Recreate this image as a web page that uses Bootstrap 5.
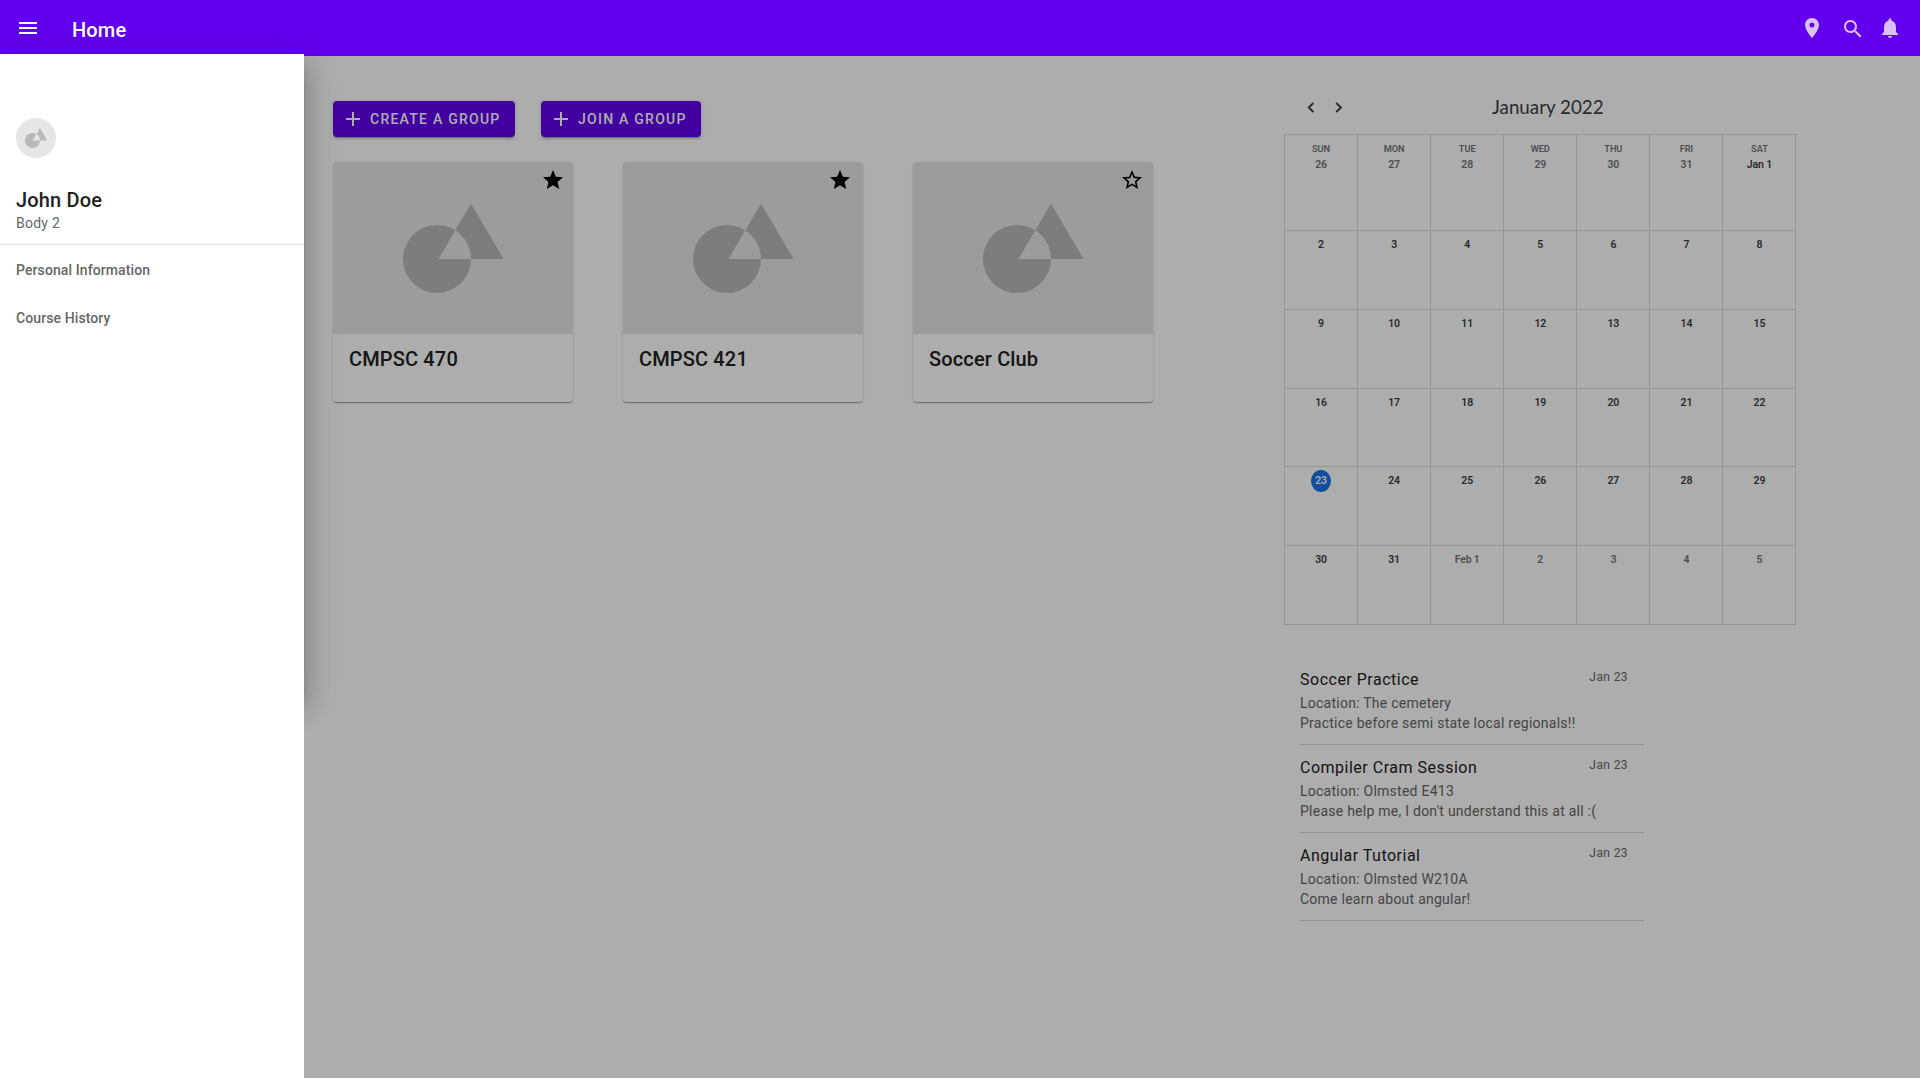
<!DOCTYPE html>
<html lang="en">
<head>
<meta charset="utf-8">
<meta name="viewport" content="width=device-width, initial-scale=1">
<title>Home</title>
<link href="https://cdn.jsdelivr.net/npm/bootstrap@5.3.0/dist/css/bootstrap.min.css" rel="stylesheet">
<style>
  body { font-family: Roboto, "Liberation Sans", sans-serif; height: 1080px; overflow: hidden; color: #212121; }
  .topbar { height: 56px; padding: 0 18px 0 16px; background: #6200ee; }
  .topbar-title { font-size: 20px; font-weight: 500; letter-spacing: .15px; line-height: 24px; margin: 2px 0 0 32px; }
  .topbar-icons { color: rgba(255,255,255,.76); }
  .ic { width: 24px; height: 24px; fill: currentColor; display: block; flex: none; }
  .ic-search { margin: 1px 13px 0 17px; }
  .page-body { height: 1022px; padding-left: 333px; }
  .groups { width: 820px; margin-right: 131px; padding-top: 45px; }
  .group-actions { gap: 26px; }
  .btn-group-action { width: 160px; height: 36px; padding: 0 0 0 8px; gap: 5px; border: 0; border-radius: 4px; background: #6200ee; color: #fff; white-space: nowrap;
    font-size: 14px; font-weight: 500; letter-spacing: 1.25px; line-height: 36px;
    box-shadow: 0 3px 1px -2px rgba(0,0,0,.2), 0 2px 2px rgba(0,0,0,.14), 0 1px 5px rgba(0,0,0,.12); }
  .btn-create { width: 182px; }
  .group-list { gap: 50px; margin-top: 25px; }
  .group-card { width: 240px; height: 240px; border: 0; border-radius: 4px; overflow: visible;
    box-shadow: 0 2px 1px -1px rgba(0,0,0,.2), 0 1px 1px rgba(0,0,0,.14), 0 1px 3px rgba(0,0,0,.12); }
  .group-pic { height: 172px; background: #e6e6e6; border-radius: 4px 4px 0 0; }
  .group-pic > svg { display: block; }
  .shape { fill: #b9b9b9; fill-rule: evenodd; }
  .star { top: 6px; right: 8px; color: #000; }
  .star-b { right: 11px; }
  .star-c { right: 9px; }
  .group-name { font-size: 20px; font-weight: 500; letter-spacing: .15px; line-height: 24px; padding: 13px 16px; margin: 0; }
  .agenda { width: 514px; }
  .cal-head { height: 78px; padding-top: 26px; }
  .cal-nav { width: 200px; padding-left: 17px; color: #3c4043; }
  .cal-nav svg { fill: none; stroke: currentColor; stroke-width: 1.9; }
  .cal-title { font-family: Lato, sans-serif; font-size: 18.8px; line-height: 26px; color: #3c4043; white-space: nowrap; margin-left: 8px; }
  .cal { width: 512.5px; border-top: 1px solid #dadce0; border-left: 1px solid #dadce0; }
  .week { display: grid; grid-template-columns: repeat(7, 1fr); height: 79px; }
  .week-first { height: 96px; }
  .week-short { height: 78px; }
  .day { border-right: 1px solid #dadce0; border-bottom: 1px solid #dadce0; text-align: center; font-size: 10.5px; font-weight: 600; color: #3c4043; padding-top: 3px; letter-spacing: -.15px; }
  .day > span { display: block; line-height: 22px; }
  .dow { font-size: 9.2px; line-height: 12px; color: #70757a; padding-top: 5px; margin-bottom: -1px; letter-spacing: -.05px; }
  .off { color: #70757a; }
  .day > .today { width: 20px; height: 22px; margin: 0 auto; border-radius: 50%; background: #1a73e8; color: #fff; }
  .events { width: 344px; margin: 32px 0 0 16px; }
  .event { height: 88px; border-bottom: 1px solid #dadada; padding-top: 11px; }
  .event-title { font-size: 16px; letter-spacing: .5px; line-height: 24px; height: 25px; }
  .event-date { font-size: 12px; letter-spacing: .4px; line-height: 16px; padding: 1px 16px 0 0; color: #666; }
  .event-line { font-size: 14px; letter-spacing: .25px; line-height: 20px; color: #666; }
  .scrim { top: 56px; left: 0; width: 1920px; height: 1022px; background: rgba(0,0,0,.32); }
  .drawer { top: 54px; left: 0; width: 304px; height: 1026px; background: #fff; }
  .drawer-shade { top: 54px; left: 0; width: 304px; height: 640px;
    box-shadow: 0 8px 10px -5px rgba(0,0,0,.2), 0 16px 24px 2px rgba(0,0,0,.14), 0 6px 30px 5px rgba(0,0,0,.12); }
  .profile { padding: 64px 16px 11px; border-bottom: 1px solid #e0e0e0; margin-bottom: 1px; }
  .avatar { width: 40px; height: 40px; border-radius: 50%; background: #e6e6e6; display: block; margin-bottom: 29px; }
  .user-name { font-size: 20px; font-weight: 500; letter-spacing: .15px; line-height: 26px; margin: 0; }
  .user-sub { font-size: 14px; letter-spacing: .25px; line-height: 20px; color: #666; }
  .drawer-item { height: 48px; padding: 0 16px; border: 0; font-size: 14px; font-weight: 500; letter-spacing: .1px; color: #666; }
</style>
<script src="https://cdn.jsdelivr.net/npm/bootstrap@5.3.0/dist/js/bootstrap.bundle.min.js"></script>
</head>
<body class="bg-white position-relative">
<svg class="d-none" aria-hidden="true">
  <symbol id="plus" viewBox="0 0 24 24"><path d="M19 13h-6v6h-2v-6H5v-2h6V5h2v6h6v2z"/></symbol>
  <symbol id="star" viewBox="0 0 24 24"><path d="M12 17.27L18.18 21l-1.64-7.03L22 9.24l-7.19-.61L12 2 9.19 8.63 2 9.24l5.46 4.73L5.82 21z"/></symbol>
  <symbol id="star-o" viewBox="0 0 24 24"><path d="M22 9.24l-7.19-.62L12 2 9.19 8.63 2 9.24l5.46 4.73L5.82 21 12 17.27 18.18 21l-1.63-7.03L22 9.24zM12 15.4l-3.76 2.27 1-4.28-3.32-2.88 4.38-.38L12 6.1l1.71 4.04 4.38.38-3.32 2.88 1 4.28L12 15.4z"/></symbol>
  <symbol id="media" viewBox="0 0 240 172"><path class="shape" d="M70 97a34 34 0 1 1 68 0a34 34 0 1 1-68 0zM138 41.5L170.5 97h-65z"/></symbol>
</svg>

<nav class="topbar d-flex align-items-start text-white">
  <svg class="ic mt-3" viewBox="0 0 24 24"><path d="M3 18h18v-2H3v2zm0-5h18v-2H3v2zm0-7v2h18V6H3z"/></svg>
  <div class="topbar-title pt-3">Home</div>
  <div class="topbar-icons d-flex ms-auto pt-3">
    <svg class="ic" viewBox="0 0 24 24"><path d="M12 2C8.13 2 5 5.13 5 9c0 5.25 7 13 7 13s7-7.75 7-13c0-3.87-3.13-7-7-7zm0 9.5a2.5 2.5 0 1 1 0-5 2.5 2.5 0 0 1 0 5z"/></svg>
    <svg class="ic ic-search" viewBox="0 0 24 24"><path d="M15.5 14h-.79l-.28-.27C15.41 12.59 16 11.11 16 9.5 16 5.91 13.09 3 9.5 3S3 5.91 3 9.5 5.91 16 9.5 16c1.61 0 3.09-.59 4.23-1.57l.27.28v.79l5 4.99L20.49 19l-4.99-5zm-6 0C7.01 14 5 11.99 5 9.5S7.01 5 9.5 5 14 7.01 14 9.5 11.99 14 9.5 14z"/></svg>
    <svg class="ic" viewBox="0 0 24 24"><path d="M12 22c1.1 0 2-.9 2-2h-4c0 1.1.89 2 2 2zm6-6v-5c0-3.07-1.64-5.64-4.5-6.32V4c0-.83-.67-1.5-1.5-1.5s-1.5.67-1.5 1.5v.68C7.63 5.36 6 7.92 6 11v5l-2 2v1h16v-1l-2-2z"/></svg>
  </div>
</nav>

<main class="page-body d-flex">
  <section class="groups flex-shrink-0">
    <div class="group-actions d-flex">
      <button class="btn btn-group-action btn-create d-flex align-items-center"><svg class="ic"><use href="#plus"/></svg>CREATE A GROUP</button>
      <button class="btn btn-group-action d-flex align-items-center"><svg class="ic"><use href="#plus"/></svg>JOIN A GROUP</button>
    </div>
    <div class="group-list d-flex">
      <article class="card group-card">
        <div class="group-pic position-relative"><svg width="240" height="172"><use href="#media"/></svg><svg class="ic star position-absolute"><use href="#star"/></svg></div>
        <h2 class="group-name">CMPSC 470</h2>
      </article>
      <article class="card group-card">
        <div class="group-pic position-relative"><svg width="240" height="172"><use href="#media"/></svg><svg class="ic star star-b position-absolute"><use href="#star"/></svg></div>
        <h2 class="group-name">CMPSC 421</h2>
      </article>
      <article class="card group-card">
        <div class="group-pic position-relative"><svg width="240" height="172"><use href="#media"/></svg><svg class="ic star star-c position-absolute"><use href="#star-o"/></svg></div>
        <h2 class="group-name">Soccer Club</h2>
      </article>
    </div>
  </section>

  <section class="agenda flex-shrink-0">
    <div class="cal-head d-flex">
      <div class="cal-nav d-flex">
        <svg width="27" height="52" viewBox="0 0 27 52"><path d="M12.4 21L7.800 25.500l4.600 4.500"/></svg>
        <svg width="27" height="52" viewBox="0 0 27 52"><path d="M8.300 21l4.600 4.500L8.300 30"/></svg>
      </div>
      <div class="cal-title pt-2 mt-1">January 2022</div>
    </div>
    <div class="cal">
      <div class="week week-first">
        <div class="day off"><div class="dow">SUN</div><span>26</span></div><div class="day off"><div class="dow">MON</div><span>27</span></div><div class="day off"><div class="dow">TUE</div><span>28</span></div><div class="day off"><div class="dow">WED</div><span>29</span></div><div class="day off"><div class="dow">THU</div><span>30</span></div><div class="day off"><div class="dow">FRI</div><span>31</span></div><div class="day"><div class="dow">SAT</div><span>Jan 1</span></div>
      </div>
      <div class="week"><div class="day"><span>2</span></div><div class="day"><span>3</span></div><div class="day"><span>4</span></div><div class="day"><span>5</span></div><div class="day"><span>6</span></div><div class="day"><span>7</span></div><div class="day"><span>8</span></div></div>
      <div class="week"><div class="day"><span>9</span></div><div class="day"><span>10</span></div><div class="day"><span>11</span></div><div class="day"><span>12</span></div><div class="day"><span>13</span></div><div class="day"><span>14</span></div><div class="day"><span>15</span></div></div>
      <div class="week week-short"><div class="day"><span>16</span></div><div class="day"><span>17</span></div><div class="day"><span>18</span></div><div class="day"><span>19</span></div><div class="day"><span>20</span></div><div class="day"><span>21</span></div><div class="day"><span>22</span></div></div>
      <div class="week"><div class="day"><span class="today">23</span></div><div class="day"><span>24</span></div><div class="day"><span>25</span></div><div class="day"><span>26</span></div><div class="day"><span>27</span></div><div class="day"><span>28</span></div><div class="day"><span>29</span></div></div>
      <div class="week"><div class="day"><span>30</span></div><div class="day"><span>31</span></div><div class="day off"><span>Feb 1</span></div><div class="day off"><span>2</span></div><div class="day off"><span>3</span></div><div class="day off"><span>4</span></div><div class="day off"><span>5</span></div></div>
    </div>
    <div class="events">
      <div class="event"><div class="d-flex justify-content-between"><div class="event-title">Soccer Practice</div><div class="event-date">Jan 23</div></div><div class="event-line">Location: The cemetery</div><div class="event-line">Practice before semi state local regionals!!</div></div>
      <div class="event"><div class="d-flex justify-content-between"><div class="event-title">Compiler Cram Session</div><div class="event-date">Jan 23</div></div><div class="event-line">Location: Olmsted E413</div><div class="event-line">Please help me, I don't understand this at all :(</div></div>
      <div class="event"><div class="d-flex justify-content-between"><div class="event-title">Angular Tutorial</div><div class="event-date">Jan 23</div></div><div class="event-line">Location: Olmsted W210A</div><div class="event-line">Come learn about angular!</div></div>
    </div>
  </section>
</main>

<div class="scrim position-absolute"></div>
<div class="drawer-shade position-absolute"></div>
<aside class="drawer position-absolute">
  <div class="profile">
    <svg class="avatar" viewBox="0 0 180 180"><path class="shape" d="M40 101a34 34 0 1 1 68 0a34 34 0 1 1-68 0zM108 45.500L140.500 101h-65z"/></svg>
    <h1 class="user-name">John Doe</h1>
    <div class="user-sub">Body 2</div>
  </div>
  <div class="list-group list-group-flush">
    <a class="list-group-item drawer-item d-flex align-items-center">Personal Information</a>
    <a class="list-group-item drawer-item d-flex align-items-center">Course History</a>
  </div>
</aside>
</body>
</html>
